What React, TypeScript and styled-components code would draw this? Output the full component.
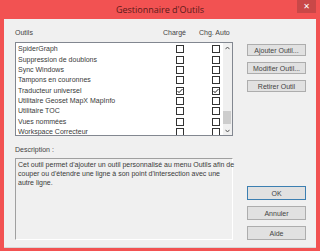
import styled, { createGlobalStyle } from 'styled-components'

const GlobalStyle = createGlobalStyle`
  html, body {
    margin: 0;
    padding: 0;
    background: #f25252;
  }
  body {
    font-family: "Liberation Sans", Arial, sans-serif;
  }
`

type Tool = {
  name: string
  loaded: boolean
  auto: boolean
}

const tools: Tool[] = [
  { name: 'SpiderGraph', loaded: false, auto: false },
  { name: 'Suppression de doublons', loaded: false, auto: false },
  { name: 'Sync Windows', loaded: false, auto: false },
  { name: 'Tampons en couronnes', loaded: false, auto: false },
  { name: 'Traducteur universel', loaded: true, auto: true },
  { name: 'Utilitaire Geoset MapX MapInfo', loaded: false, auto: false },
  { name: 'Utilitaire TOC', loaded: false, auto: false },
  { name: 'Vues nommées', loaded: false, auto: false },
  { name: 'Workspace Correcteur', loaded: false, auto: false },
]

const Window = styled.div`
  width: 320px;
  height: 251px;
  box-sizing: border-box;
  background: #f25252;
  padding: 0 4px 3px 4px;
  display: flex;
  flex-direction: column;
`

const TitleBar = styled.div`
  height: 19px;
  display: grid;
  grid-template-columns: 1fr auto 1fr;
  align-items: start;
`

const Title = styled.div`
  grid-column: 2;
  font-family: "Open Sans", "Noto Sans", sans-serif;
  font-size: 9px;
  line-height: 19px;
  color: #5a1a1a;
`

const CloseButton = styled.div`
  grid-column: 3;
  justify-self: end;
  width: 19px;
  height: 13px;
  background: #c94848;
  color: #fff;
  font-family: "DejaVu Sans", sans-serif;
  font-weight: bold;
  font-size: 8px;
  line-height: 13px;
  text-align: center;
`

const Panel = styled.div`
  flex: 1;
  background: #f0f0f0;
  border-bottom: 1px solid #d8d8d8;
  padding: 9px 10px 7px 11px;
  display: grid;
  grid-template-columns: 218px 59px;
  column-gap: 14px;
  font-size: 7px;
  color: #3a3a3a;
`

const LeftColumn = styled.div`
  display: flex;
  flex-direction: column;
`

const HeaderRow = styled.div`
  height: 10px;
  line-height: 10px;
  display: grid;
  grid-template-columns: 148px 36px 1fr;
  color: #444;
  margin-bottom: 4px;
`

const ListBox = styled.div`
  height: 94px;
  box-sizing: border-box;
  border: 1px solid #828790;
  background: #fff;
  display: flex;
  overflow: hidden;
`

const Rows = styled.div`
  flex: 1;
  padding-top: 1px;
`

const Row = styled.div`
  height: 10.35px;
  display: grid;
  grid-template-columns: 160px 36px 1fr;
  align-items: center;
  line-height: 10px;
`

const ToolName = styled.span`
  padding-left: 2px;
  white-space: nowrap;
`

const CheckBox = styled.span<{ $checked: boolean }>`
  width: 8px;
  height: 8px;
  box-sizing: border-box;
  border: 1px solid #333;
  background: #fff;
  display: flex;
  align-items: center;
  justify-content: center;

  svg {
    display: ${p => (p.$checked ? 'block' : 'none')};
  }
`

const ScrollBar = styled.div`
  width: 9px;
  background: #f0f0f0;
  display: flex;
  flex-direction: column;
  align-items: stretch;
`

const ScrollArrow = styled.div`
  height: 9px;
  display: flex;
  align-items: center;
  justify-content: center;
`

const ScrollTrack = styled.div`
  flex: 1;
  display: flex;
  flex-direction: column;
  justify-content: flex-end;
  padding: 0 1px 0 0;
`

const ScrollThumb = styled.div`
  height: 13px;
  margin-bottom: 2px;
  background: #cdcdcd;
`

const DescLabel = styled.div`
  margin-top: 9px;
  height: 10px;
  line-height: 10px;
  color: #444;
`

const DescBox = styled.div`
  margin-top: 3px;
  height: 82px;
  box-sizing: border-box;
  border: 1px solid #a0a0a0;
  border-right-color: #fff;
  border-bottom-color: #fff;
  padding: 1px 2px;
  line-height: 9px;
  white-space: nowrap;
`

const RightColumn = styled.div`
  display: flex;
  flex-direction: column;
  padding-top: 16px;
  gap: 6px;
`

const Spacer = styled.div`
  flex: 1;
`

const Button = styled.div<{ $default?: boolean; $small?: boolean }>`
  height: ${p => (p.$small ? '12px' : '14px')};
  box-sizing: border-box;
  border: 1px solid ${p => (p.$default ? '#3c7fb1' : '#adadad')};
  background: #e1e1e1;
  color: #444;
  display: flex;
  align-items: center;
  justify-content: center;
  white-space: nowrap;
`

const Check = () => (
  <svg width="6" height="6" viewBox="0 0 6 6">
    <path d="M0.5 3 L2 4.6 L5.5 1" fill="none" stroke="#222" strokeWidth="1" />
  </svg>
)

const Arrow = ({ up }: { up?: boolean }) => (
  <svg width="5" height="4" viewBox="0 0 5 4">
    <path d={up ? 'M0.5 3.2 L2.5 1 L4.5 3.2' : 'M0.5 0.8 L2.5 3 L4.5 0.8'} fill="none" stroke="#555" strokeWidth="1" />
  </svg>
)

const App = () => {
  return (
    <>
      <GlobalStyle />
      <Window>
        <TitleBar>
          <Title>Gestionnaire d'Outils</Title>
          <CloseButton>✕</CloseButton>
        </TitleBar>
        <Panel>
          <LeftColumn>
            <HeaderRow>
              <span>Outils</span>
              <span>Chargé</span>
              <span>Chg. Auto</span>
            </HeaderRow>
            <ListBox>
              <Rows>
                {tools.map(tool => (
                  <Row key={tool.name}>
                    <ToolName>{tool.name}</ToolName>
                    <CheckBox $checked={tool.loaded}>
                      <Check />
                    </CheckBox>
                    <CheckBox $checked={tool.auto}>
                      <Check />
                    </CheckBox>
                  </Row>
                ))}
              </Rows>
              <ScrollBar>
                <ScrollArrow>
                  <Arrow up />
                </ScrollArrow>
                <ScrollTrack>
                  <ScrollThumb />
                </ScrollTrack>
                <ScrollArrow>
                  <Arrow />
                </ScrollArrow>
              </ScrollBar>
            </ListBox>
            <DescLabel>Description :</DescLabel>
            <DescBox>
              Cet outil permet d'ajouter un outil personnalisé au menu Outils afin de
              <br />
              couper ou d'étendre une ligne à son point d'intersection avec une
              <br />
              autre ligne.
            </DescBox>
          </LeftColumn>
          <RightColumn>
            <Button $small>Ajouter Outil...</Button>
            <Button $small>Modifier Outil...</Button>
            <Button $small>Retirer Outil</Button>
            <Spacer />
            <Button $default>OK</Button>
            <Button>Annuler</Button>
            <Button>Aide</Button>
          </RightColumn>
        </Panel>
      </Window>
    </>
  )
}

export default App
